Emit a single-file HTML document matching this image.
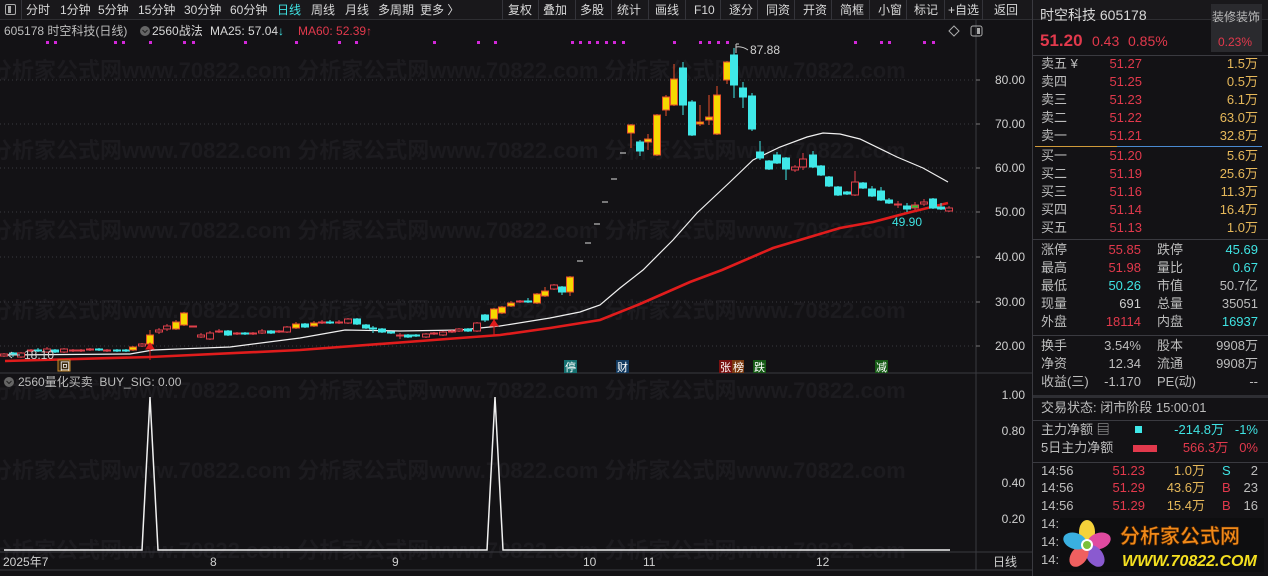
<!DOCTYPE html>
<html><head><meta charset="utf-8">
<style>
*{margin:0;padding:0;box-sizing:border-box}
body{width:1268px;height:576px;background:#131215;overflow:hidden;position:relative;font-family:"Liberation Sans","Noto Sans CJK SC",sans-serif;font-size:12px;color:#cfcfcf}
.a{position:absolute;white-space:nowrap;line-height:1}
#tb{position:absolute;left:0;top:0;width:1268px;height:20px;background:#19181b;border-bottom:1px solid #2e2e32}
.sep{position:absolute;top:0;width:1px;height:20px;background:#34343a}
.r{color:#e2394c}.y{color:#e6b85a}.c{color:#3fe3e3}.w{color:#d8d8d8}.g{color:#bdbdbd}
.hl{position:absolute;left:1033px;width:235px;height:1px;background:#3a3a40}
</style></head><body>
<div id="tb">
<div class="a" style="left:5px;top:4px;width:11px;height:11px;border:1px solid #aaa;border-radius:2px"></div>
<div class="a" style="left:8px;top:6px;width:3px;height:7px;background:#aaa"></div>
<div class="sep" style="left:21px"></div>
<div class="a w" style="left:26px;top:4px">分时</div>
<div class="a w" style="left:60px;top:4px">1分钟</div>
<div class="a w" style="left:98px;top:4px">5分钟</div>
<div class="a w" style="left:138px;top:4px">15分钟</div>
<div class="a w" style="left:184px;top:4px">30分钟</div>
<div class="a w" style="left:230px;top:4px">60分钟</div>
<div class="a c" style="left:277px;top:4px">日线</div>
<div class="a w" style="left:311px;top:4px">周线</div>
<div class="a w" style="left:345px;top:4px">月线</div>
<div class="a w" style="left:378px;top:4px">多周期</div>
<div class="a w" style="left:420px;top:4px">更多 〉</div>
<div class="sep" style="left:502px"></div>
<div class="a w" style="left:508px;top:4px">复权</div><div class="sep" style="left:538px"></div>
<div class="a w" style="left:543px;top:4px">叠加</div><div class="sep" style="left:575px"></div>
<div class="a w" style="left:580px;top:4px">多股</div><div class="sep" style="left:611px"></div>
<div class="a w" style="left:617px;top:4px">统计</div><div class="sep" style="left:648px"></div>
<div class="a w" style="left:655px;top:4px">画线</div><div class="sep" style="left:685px"></div>
<div class="a w" style="left:694px;top:4px">F10</div><div class="sep" style="left:720px"></div>
<div class="a w" style="left:729px;top:4px">逐分</div><div class="sep" style="left:757px"></div>
<div class="a w" style="left:766px;top:4px">同资</div><div class="sep" style="left:794px"></div>
<div class="a w" style="left:803px;top:4px">开资</div><div class="sep" style="left:831px"></div>
<div class="a w" style="left:840px;top:4px">简框</div><div class="sep" style="left:869px"></div>
<div class="a w" style="left:878px;top:4px">小窗</div><div class="sep" style="left:906px"></div>
<div class="a w" style="left:914px;top:4px">标记</div><div class="sep" style="left:944px"></div>
<div class="a w" style="left:948px;top:4px">+自选</div><div class="sep" style="left:982px"></div>
<div class="a w" style="left:994px;top:4px">返回</div><div class="sep" style="left:1032px"></div>
</div>

<svg style="position:absolute;left:0;top:0" width="1033" height="576" id="sv">
<g fill="#1c1b1f" font-size="22" font-weight="bold" font-family="Liberation Sans,Noto Sans CJK SC,sans-serif">
<text x="-10" y="78">分析家公式网www.70822.com  分析家公式网www.70822.com  分析家公式网www.70822.com</text>
<text x="-10" y="158">分析家公式网www.70822.com  分析家公式网www.70822.com  分析家公式网www.70822.com</text>
<text x="-10" y="238">分析家公式网www.70822.com  分析家公式网www.70822.com  分析家公式网www.70822.com</text>
<text x="-10" y="318">分析家公式网www.70822.com  分析家公式网www.70822.com  分析家公式网www.70822.com</text>
<text x="-10" y="398">分析家公式网www.70822.com  分析家公式网www.70822.com  分析家公式网www.70822.com</text>
<text x="-10" y="478">分析家公式网www.70822.com  分析家公式网www.70822.com  分析家公式网www.70822.com</text>
<text x="-10" y="558">分析家公式网www.70822.com  分析家公式网www.70822.com  分析家公式网www.70822.com</text>
</g>
<g stroke="#3a3a3f" stroke-dasharray="1,3">
<line x1="0" y1="80" x2="975" y2="80"/><line x1="0" y1="124" x2="975" y2="124"/><line x1="0" y1="168" x2="975" y2="168"/><line x1="0" y1="212" x2="975" y2="212"/><line x1="0" y1="257" x2="975" y2="257"/><line x1="0" y1="302" x2="975" y2="302"/><line x1="0" y1="346" x2="975" y2="346"/>
</g>
<line x1="976" y1="20" x2="976" y2="570" stroke="#3a3a40"/>
<line x1="0" y1="373" x2="1033" y2="373" stroke="#3a3a40"/>
<line x1="0" y1="552" x2="1033" y2="552" stroke="#3a3a40"/>
<line x1="0" y1="570" x2="1033" y2="570" stroke="#3a3a40"/>
<g fill="#d0d0d0" font-size="12" text-anchor="end" font-family="Liberation Sans,sans-serif">
<text x="1025" y="84">80.00</text><text x="1025" y="128">70.00</text><text x="1025" y="172">60.00</text><text x="1025" y="216">50.00</text><text x="1025" y="261">40.00</text><text x="1025" y="306">30.00</text><text x="1025" y="350">20.00</text>
<text x="1025" y="399">1.00</text><text x="1025" y="435">0.80</text><text x="1025" y="487">0.40</text><text x="1025" y="523">0.20</text>
</g>
<g stroke="#777"><line x1="976" y1="80" x2="980" y2="80"/><line x1="976" y1="124" x2="980" y2="124"/><line x1="976" y1="168" x2="980" y2="168"/><line x1="976" y1="212" x2="980" y2="212"/><line x1="976" y1="257" x2="980" y2="257"/><line x1="976" y1="302" x2="980" y2="302"/><line x1="976" y1="346" x2="980" y2="346"/></g>
<g id="magenta" fill="#d228d8"></g>
<polyline fill="none" stroke="#f0f0f0" stroke-width="1.2" points="4,355 130,354 153,350 230,347 300,338 345,330 400,331 460,330 500,326 550,318 580,312 600,305 620,288 643,270 673,240 697,213 730,182 753,160 780,147 807,137 823,133 840,134 860,139 897,157 923,168 948,182"/>
<polyline fill="none" stroke="#e01c1c" stroke-width="2.6" points="5,361 150,357 300,350 460,338 500,335 550,328 600,320 640,304 690,282 722,270 773,248 840,228 873,222 907,213 948,203"/>
<g id="cd"></g>
<g font-size="12" font-family="Liberation Sans,sans-serif">
<path d="M736 53 V44 M736 44 h3 M736 47 q6 -1 12 3" stroke="#ccc" fill="none"/>
<text x="750" y="54" fill="#d0d0d0">87.88</text>
<text x="892" y="226" fill="#3fe3e3">49.90</text>
<path d="M8 355 h12 M8 355 l4 -3 M8 355 l4 3" stroke="#ccc" fill="none"/>
<text x="24" y="359" fill="#d0d0d0">18.10</text>
</g>
<rect x="58" y="360" width="12" height="11" fill="#3a2a10" stroke="#c98a2a"/>
<text x="60" y="370" font-size="10" fill="#fff">回</text>
<path d="M150 360 V343 M146 349 l4 -6 l4 6z" stroke="#e01c1c" fill="#e01c1c"/>
<path d="M494 336 V320 M490 326 l4 -6 l4 6z" stroke="#e01c1c" fill="#e01c1c"/>
<g font-size="11" fill="#fff" font-family="Noto Sans CJK SC,sans-serif">
<rect x="564" y="360" width="13" height="13" fill="#157070"/><text x="565" y="371">停</text>
<rect x="616" y="360" width="13" height="13" fill="#123a60"/><text x="617" y="371">财</text>
<rect x="719" y="360" width="13" height="13" fill="#7a1010"/><text x="720" y="371">张</text>
<rect x="732" y="360" width="12" height="13" fill="#7a3a10"/><text x="733" y="371">榜</text>
<rect x="753" y="360" width="13" height="13" fill="#155a15"/><text x="754" y="371">跌</text>
<rect x="875" y="360" width="13" height="13" fill="#155a15"/><text x="876" y="371">减</text>
</g>
<polyline fill="none" stroke="#f0f0f0" stroke-width="1.5" points="4,550 142,550 150,397 158,550 487,550 495,397 503,550 950,550"/>
<circle cx="9" cy="382" r="5" fill="#666"/><path d="M6.5 381 l2.5 2.5 l2.5 -2.5" stroke="#222" fill="none"/>
<circle cx="145" cy="31" r="5" fill="#666"/><path d="M142.5 30 l2.5 2.5 l2.5 -2.5" stroke="#222" fill="none"/>
<path d="M949 31 l5 -5 l5 5 l-5 5z" stroke="#aaa" fill="none"/>
<rect x="971" y="26" width="11" height="10" rx="2" stroke="#aaa" fill="none"/><rect x="977" y="28" width="3" height="6" fill="#aaa"/>
<g font-size="12" fill="#d0d0d0" font-family="Liberation Sans,Noto Sans CJK SC,sans-serif">
<text x="3" y="566">2025年7</text><text x="210" y="566">8</text><text x="392" y="566">9</text><text x="583" y="566">10</text><text x="643" y="566">11</text><text x="816" y="566">12</text><text x="993" y="566">日线</text>
</g>
</svg>

<div class="a g" style="left:4px;top:25px">605178 时空科技(日线)</div>
<div class="a w" style="left:152px;top:25px">2560战法</div>
<div class="a w" style="left:210px;top:25px">MA25: 57.04<span class="c">↓</span></div>
<div class="a r" style="left:298px;top:25px">MA60: 52.39↑</div>
<div class="a g" style="left:18px;top:376px">2560量化买卖 &nbsp;BUY_SIG: 0.00</div>

<div class="a" style="left:1032px;top:0;width:1px;height:576px;background:#3a3a40"></div>
<div class="a w" style="left:1040px;top:8px;font-size:14px">时空科技 605178</div>
<div class="a r" style="left:1040px;top:32px;font-size:17px;font-weight:bold">51.20</div>
<div class="a r" style="left:1092px;top:34px;font-size:14px">0.43</div>
<div class="a r" style="left:1128px;top:34px;font-size:14px">0.85%</div>
<div class="a" style="left:1211px;top:4px;width:51px;height:48px;background:#2a2a2e"></div>
<div class="a g" style="left:1212px;top:11px">装修装饰</div>
<div class="a r" style="left:1218px;top:36px">0.23%</div>
<div class="hl" style="top:55px"></div>
<div class="a" style="left:1035px;top:146px;width:82px;height:1px;background:#d09a3a"></div>
<div class="a" style="left:1117px;top:146px;width:145px;height:1px;background:#4a8ad0"></div>
<div class="hl" style="top:239px"></div>
<div class="hl" style="top:335px"></div>
<div class="hl" style="top:395px;height:3px;background:#2e2e33"></div>
<div class="hl" style="top:420px"></div>
<div class="hl" style="top:462px"></div>
<div id="rp" style="font-size:13px"></div>

<div class="a" style="left:1060px;top:518px;width:204px;height:54px;background:#0e0e10"></div>
<svg style="position:absolute;left:1060px;top:518px" width="208" height="56">
<g transform="translate(27,27)">
<ellipse cx="0" cy="-13" rx="8" ry="12" fill="#f5d23a"/>
<ellipse cx="12" cy="-4" rx="8" ry="12" fill="#e04aa0" transform="rotate(72 12 -4)"/>
<ellipse cx="8" cy="11" rx="8" ry="12" fill="#8a5ad0" transform="rotate(144 8 11)"/>
<ellipse cx="-8" cy="11" rx="8" ry="12" fill="#f06060" transform="rotate(216 -8 11)"/>
<ellipse cx="-12" cy="-4" rx="8" ry="12" fill="#3ab0e0" transform="rotate(288 -12 -4)"/>
<circle r="6" fill="#fff"/><circle r="4" fill="#7ac03a"/>
</g>
<text x="60" y="25" font-size="20" font-weight="bold" fill="#f08a1a" stroke="#5a2a00" stroke-width="0.6" font-family="Noto Sans CJK SC,sans-serif">分析家公式网</text>
<text x="62" y="48" font-size="16" font-weight="bold" font-style="italic" fill="#f5e020" font-family="Liberation Sans,sans-serif">WWW.70822.COM</text>
</svg>

<script>
var NS="http://www.w3.org/2000/svg";
function el(t,a,p){var e=document.createElementNS(NS,t);for(var k in a)e.setAttribute(k,a[k]);(p||document.getElementById('cd')).appendChild(e);return e;}
[46,54,114,122,149,183,192,244,295,338,355,433,477,494,571,579,588,596,605,613,622,673,699,708,717,726,854,880,888,923,932].forEach(function(x){el('rect',{x:x,y:41,width:3,height:3},document.getElementById('magenta'));});
var col={y:['#f5d800','#e8502a'],r:['none','#e0404a'],c:['#3fe8e8','#3fe8e8'],g:['#2ec82e','#e0404a']};
var C=[
[4,354,356,353,357,'r'],[13,353,355,352,357,'c'],[21,353,357,352,358,'r'],[31,350,351,349,352,'r'],[38,350,351,348,352,'c'],[47,349,352,347,353,'r'],[55,350,352,349,353,'c'],[64,349,352,348,353,'r'],[73,350,351,349,352,'r'],[81,350,351,349,352,'r'],[90,349,350,348,351,'r'],[99,349,350,348,351,'c'],[107,350,351,349,352,'r'],[117,350,351,349,352,'c'],[126,350,351,349,352,'c'],[133,347,350,346,351,'y'],[142,344,346,343,347,'r'],
[150,335,344,330,347,'y'],[159,330,332,328,334,'r'],[167,326,329,324,331,'r'],[176,322,329,320,330,'y'],[184,313,325,312,326,'y'],[193,326,327,326,327,'r'],
[201,335,337,333,338,'r'],[210,333,339,331,340,'r'],[219,331,332,329,333,'r'],[228,331,335,330,336,'c'],[237,333,334,332,335,'r'],[245,333,334,332,335,'c'],[253,333,334,332,335,'r'],[262,331,333,329,334,'r'],[271,331,333,330,334,'c'],[279,331,332,330,333,'r'],[287,327,332,326,333,'r'],[296,324,328,322,329,'y'],[305,324,327,323,328,'c'],[314,323,326,321,327,'y'],[322,322,323,320,324,'r'],[330,322,323,320,324,'c'],[339,322,323,320,324,'r'],[348,319,323,318,324,'r'],[357,319,324,318,325,'c'],[366,325,328,324,329,'c'],[373,328,329,326,333,'c'],[382,329,332,328,333,'c'],[391,332,333,331,334,'c'],[400,335,336,333,339,'g'],[408,335,337,334,338,'c'],[416,335,336,334,337,'c'],[426,334,337,333,338,'r'],[434,333,334,332,335,'r'],[443,332,335,331,336,'r'],[452,331,332,330,333,'r'],[459,329,331,328,332,'r'],[468,329,331,328,332,'c'],[477,323,331,322,332,'r'],
[485,315,320,314,322,'c'],[494,309,319,308,320,'y'],[502,307,313,306,314,'y'],[511,303,306,301,307,'y'],[520,301,302,300,303,'r'],[528,301,302,298,303,'c'],[537,294,303,293,304,'y'],[545,291,296,287,297,'y'],[554,285,289,284,290,'r'],[562,287,292,286,295,'c'],[570,277,292,276,296,'y'],
[580,261,262,261,262,'d'],[588,243,244,243,244,'d'],[597,224,225,224,225,'d'],[605,202,203,202,203,'d'],[614,179,180,179,180,'d'],[623,153,154,153,154,'d'],
[631,125,133,124,148,'y'],[640,142,151,140,156,'c'],[648,139,142,134,150,'y'],[657,115,155,114,156,'y'],[666,97,110,95,116,'y'],[674,79,105,64,106,'y'],[683,68,105,62,115,'c'],[692,102,135,100,136,'c'],[700,122,124,105,126,'y'],[709,117,120,95,125,'y'],[717,95,134,86,135,'y'],[727,62,80,61,84,'y'],[734,55,85,48,98,'c'],[743,88,97,82,108,'c'],[752,96,129,93,131,'c'],[760,152,158,141,160,'c'],[769,161,169,160,170,'c'],[777,155,163,152,164,'c'],[786,158,169,157,180,'c'],[795,167,170,165,172,'r'],[803,159,167,153,170,'r'],[813,155,167,151,168,'c'],[821,166,175,165,176,'c'],[829,177,186,176,187,'c'],[838,187,195,186,196,'c'],[847,192,194,191,195,'c'],[855,182,195,171,196,'r'],[863,183,188,182,189,'c'],[872,189,196,186,197,'c'],[881,191,200,187,201,'c'],[889,200,203,198,204,'c'],[898,204,205,201,208,'r'],[907,206,209,203,212,'c'],[915,205,208,202,210,'g'],[924,202,204,199,206,'r'],[933,199,208,198,209,'c'],[941,207,209,203,210,'c'],[949,208,211,206,212,'r']];
C.forEach(function(d){var x=d[0],t=d[5];
 if(t=='d'){el('line',{x1:x-3,y1:d[1],x2:x+3,y2:d[1],stroke:'#ddd'});return;}
 var c=col[t];
 el('line',{x1:x,y1:d[3],x2:x,y2:d[4],stroke:c[1]});
 var h=Math.max(d[2]-d[1],1);
 el('rect',{x:x-3.5,y:d[1],width:7,height:h,fill:t=='r'?'#131215':c[0],stroke:c[1]});
});
var rp=document.getElementById('rp');
function tx(x,y,s,cl,al){var d=document.createElement('div');d.className='a '+cl;d.style.top=(y-7)+'px';if(al)d.style.right=(1268-x)+'px';else d.style.left=x+'px';d.innerHTML=s;rp.appendChild(d);}
var ob=[['卖五 ¥','51.27','1.5万'],['卖四','51.25','0.5万'],['卖三','51.23','6.1万'],['卖二','51.22','63.0万'],['卖一','51.21','32.8万'],null,['买一','51.20','5.6万'],['买二','51.19','25.6万'],['买三','51.16','11.3万'],['买四','51.14','16.4万'],['买五','51.13','1.0万']];
var ys=[64,82,100,118,136,0,156,174,192,210,228];
ob.forEach(function(r,i){if(!r)return;tx(1041,ys[i],r[0],'g');tx(1142,ys[i],r[1],'r',1);tx(1258,ys[i],r[2],'y',1);});
var st=[[250,'涨停','55.85','r','跌停','45.69','c'],[268,'最高','51.98','r','量比','0.67','c'],[286,'最低','50.26','c','市值','50.7亿','g'],[304,'现量','691','" style="color:#b030c0','总量','35051','g'],[322,'外盘','18114','r','内盘','16937','c'],[346,'换手','3.54%','g','股本','9908万','g'],[364,'净资','12.34','g','流通','9908万','g'],[382,'收益(三)','-1.170','g','PE(动)','--','g']];
st.forEach(function(r){tx(1041,r[0],r[1],'g');tx(1141,r[0],r[2],r[3],1);tx(1157,r[0],r[4],'g');tx(1258,r[0],r[5],r[6],1);});
tx(1041,408,'交易状态: 闭市阶段 15:00:01','g');
tx(1041,430,'主力净额 ▤','g');tx(1258,430,'-214.8万 &nbsp; -1%','c',1);
tx(1041,448,'5日主力净额','g');tx(1258,448,'<span class="r">566.3万 &nbsp; 0%</span>','r',1);
var sq=document.createElement('div');sq.className='a';sq.style.cssText='left:1135px;top:426px;width:7px;height:7px;background:#3fe8e8';rp.appendChild(sq);
var sq2=document.createElement('div');sq2.className='a';sq2.style.cssText='left:1133px;top:445px;width:24px;height:7px;background:#e2394c';rp.appendChild(sq2);
var tk=[[471,'51.23','1.0万','S','c','2'],[488,'51.29','43.6万','B','r','23'],[506,'51.29','15.4万','B','r','16']];
tk.forEach(function(r){tx(1041,r[0],'14:56','g');tx(1145,r[0],r[1],'r',1);tx(1205,r[0],r[2],'y',1);tx(1222,r[0],r[3],r[4]);tx(1258,r[0],r[5],'g',1);});
tx(1041,524,'14:','g');tx(1041,542,'14:','g');tx(1041,560,'14:','g');
</script>
</body></html>
